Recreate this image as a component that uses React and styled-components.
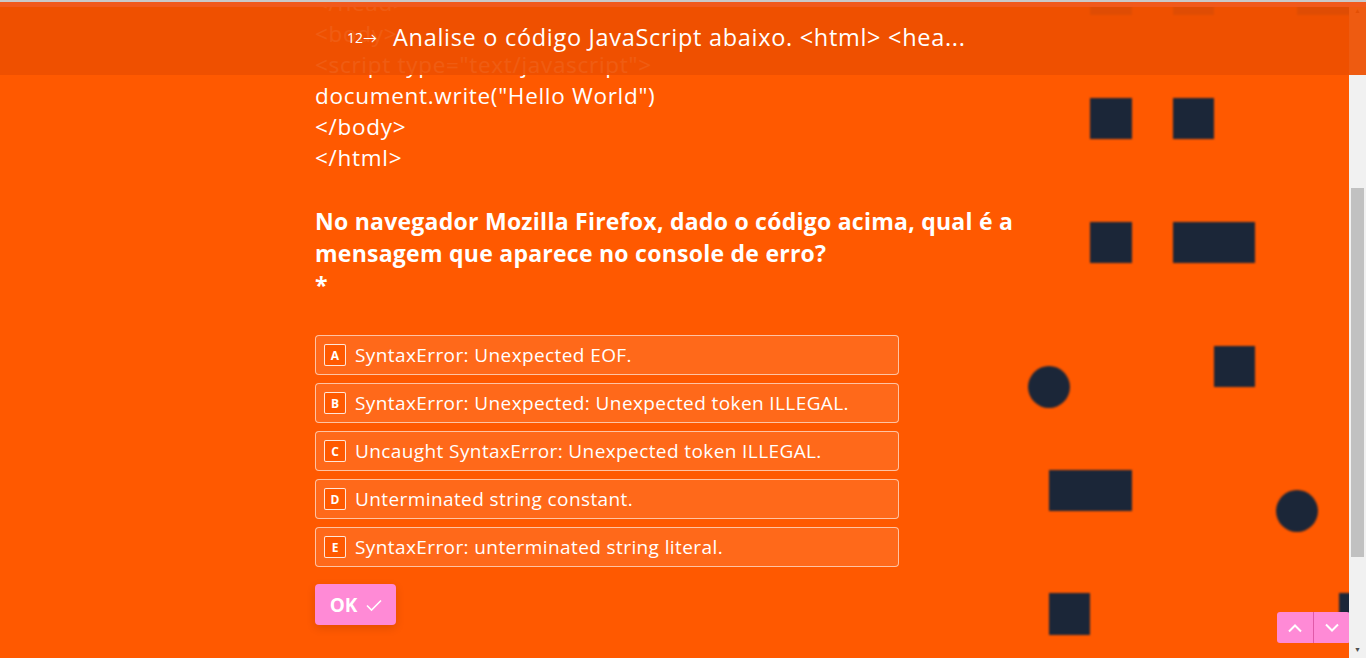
import styled, { createGlobalStyle } from 'styled-components';

const GlobalStyle = createGlobalStyle`
  html, body {
    margin: 0;
    padding: 0;
    overflow: hidden;
  }
  body {
    font-family: "Open Sans", Lato, sans-serif;
  }
`;

const NAVY = '#1b2638';

const shapes = [
  { x: 1090, y: -28, w: 42, h: 41 },
  { x: 1173, y: -28, w: 41, h: 41 },
  { x: 1297, y: -28, w: 60, h: 41 },
  { x: 1090, y: 96, w: 42, h: 41 },
  { x: 1173, y: 96, w: 41, h: 41 },
  { x: 1090, y: 220, w: 42, h: 41 },
  { x: 1173, y: 220, w: 82, h: 41 },
  { x: 1028, y: 364, w: 42, h: 42, round: true },
  { x: 1214, y: 344, w: 41, h: 41 },
  { x: 1049, y: 468, w: 83, h: 41 },
  { x: 1276, y: 488, w: 42, h: 42, round: true },
  { x: 1049, y: 591, w: 41, h: 42 },
  { x: 1339, y: 591, w: 41, h: 42 },
];

const codeLines = [
  '<html>',
  '<head>',
  '</head>',
  '<body>',
  '<script type="text/javascript">',
  'document.write("Hello World")',
  '</body>',
  '</html>',
];

const options = [
  { key: 'A', text: 'SyntaxError: Unexpected EOF.' },
  { key: 'B', text: 'SyntaxError: Unexpected: Unexpected token ILLEGAL.' },
  { key: 'C', text: 'Uncaught SyntaxError: Unexpected token ILLEGAL.' },
  { key: 'D', text: 'Unterminated string constant.' },
  { key: 'E', text: 'SyntaxError: unterminated string literal.' },
];

export default function App() {
  return (
    <>
      <GlobalStyle />
      <Frame>
        <Viewport>
          <Backdrop>
            {shapes.map((s, i) => (
              <Shape
                key={i}
                $round={s.round}
                style={{ left: s.x, top: s.y, width: s.w, height: s.h }}
              />
            ))}
          </Backdrop>
          <Content>
            <Code>
              {codeLines.map((line, i) => (
                <div key={i}>{line}</div>
              ))}
            </Code>
            <Question>
              No navegador Mozilla Firefox, dado o código acima, qual é a mensagem que aparece no console de erro?
              <br />*
            </Question>
            <Options>
              {options.map(o => (
                <Option key={o.key}>
                  <KeyBox>{o.key}</KeyBox>
                  <span>{o.text}</span>
                </Option>
              ))}
            </Options>
            <OkButton>
              OK
              <svg width="18" height="14" viewBox="0 0 18 14" fill="none">
                <path d="M2 7.5 L6.5 12 L16 2.5" stroke="#fff" strokeWidth="1.6" />
              </svg>
            </OkButton>
          </Content>
          <NavGroup>
            <NavButton>
              <svg width="16" height="10" viewBox="0 0 16 10" fill="none">
                <path d="M2 8.5 L8 2.5 L14 8.5" stroke="#fff" strokeWidth="2" />
              </svg>
            </NavButton>
            <NavButton>
              <svg width="16" height="10" viewBox="0 0 16 10" fill="none">
                <path d="M2 1.5 L8 7.5 L14 1.5" stroke="#fff" strokeWidth="2" />
              </svg>
            </NavButton>
          </NavGroup>
        </Viewport>
        <Scrollbar>
          <Arrow>▲</Arrow>
          <Track>
            <Thumb />
          </Track>
          <Arrow>▼</Arrow>
        </Scrollbar>
        <Header>
          <Counter>12→</Counter>
          <HeaderTitle>Analise o código JavaScript abaixo. &lt;html&gt; &lt;hea...</HeaderTitle>
        </Header>
      </Frame>
    </>
  );
}

const Frame = styled.div`
  position: relative;
  width: 1366px;
  height: 658px;
  display: flex;
  border-top: 2px solid #c9c9c9;
  box-sizing: border-box;
  overflow: hidden;
  background: #ff5900;
`;

const Viewport = styled.div`
  position: relative;
  flex: 1;
  overflow: hidden;
`;

const Backdrop = styled.div`
  position: absolute;
  inset: 0;
`;

const Shape = styled.div`
  position: absolute;
  background: ${NAVY};
  border-radius: ${p => (p.$round ? '50%' : '0')};
  filter: blur(0.8px);
`;

const Content = styled.div`
  position: relative;
  width: 720px;
  margin: -77px 0 0 315px;
  color: #fff;
`;

const Code = styled.div`
  font-size: 22.5px;
  line-height: 31px;
  letter-spacing: 0.7px;
`;

const Question = styled.div`
  margin-top: 32px;
  font-size: 23px;
  line-height: 32px;
  font-weight: 700;
  letter-spacing: 0.25px;
`;

const Options = styled.div`
  margin-top: 34px;
  width: 584px;
  display: flex;
  flex-direction: column;
  gap: 8px;
`;

const Option = styled.div`
  height: 40px;
  box-sizing: border-box;
  display: flex;
  align-items: center;
  gap: 9px;
  padding: 0 8px;
  background: rgba(255, 255, 255, 0.1);
  border: 1px solid rgba(255, 255, 255, 0.6);
  border-radius: 4px;
  font-size: 19px;
  letter-spacing: 0.4px;
`;

const KeyBox = styled.span`
  width: 22px;
  height: 22px;
  box-sizing: border-box;
  display: flex;
  align-items: center;
  justify-content: center;
  border: 1px solid rgba(255, 255, 255, 0.85);
  border-radius: 2px;
  background: #ff5900;
  font-size: 12px;
  font-weight: 700;
  letter-spacing: 0;
`;

const OkButton = styled.button`
  margin-top: 17px;
  width: 81px;
  height: 41px;
  display: flex;
  align-items: center;
  justify-content: center;
  gap: 8px;
  border: 0;
  border-radius: 4px;
  background: #ff8ad6;
  box-shadow: 0 3px 10px rgba(0, 0, 0, 0.12);
  color: #fff;
  font-family: "Open Sans", sans-serif;
  font-size: 19px;
  font-weight: 700;
  padding: 0 0 0 2px;
`;

const NavGroup = styled.div`
  position: absolute;
  left: 1277px;
  top: 610px;
  display: flex;
  border-radius: 3px;
  overflow: hidden;
`;

const NavButton = styled.div`
  width: 36px;
  height: 31px;
  display: flex;
  align-items: center;
  justify-content: center;
  background: #ff8ad6;
  & + & {
    border-left: 1px solid #e05aa8;
  }
`;

const Scrollbar = styled.div`
  width: 17px;
  display: flex;
  flex-direction: column;
  background: #f1f1f1;
`;

const Arrow = styled.div`
  height: 17px;
  display: flex;
  align-items: center;
  justify-content: center;
  font-size: 7px;
  color: #505050;
`;

const Track = styled.div`
  flex: 1;
  padding: 169px 2px 0;
`;

const Thumb = styled.div`
  height: 369px;
  background: #c1c1c1;
`;

const Header = styled.div`
  position: absolute;
  left: 0;
  right: 0;
  top: 0;
  height: 73px;
  display: flex;
  align-items: center;
  padding-left: 347px;
  background: rgba(238, 80, 0, 0.93);
  border-top: 5px solid rgba(240, 90, 30, 0.95);
  box-sizing: border-box;
  color: #fff;
`;

const Counter = styled.div`
  font-size: 14px;
  width: 46px;
  margin-top: -8px;
`;

const HeaderTitle = styled.div`
  font-size: 23.5px;
  letter-spacing: 0.7px;
  margin-top: -8px;
`;
